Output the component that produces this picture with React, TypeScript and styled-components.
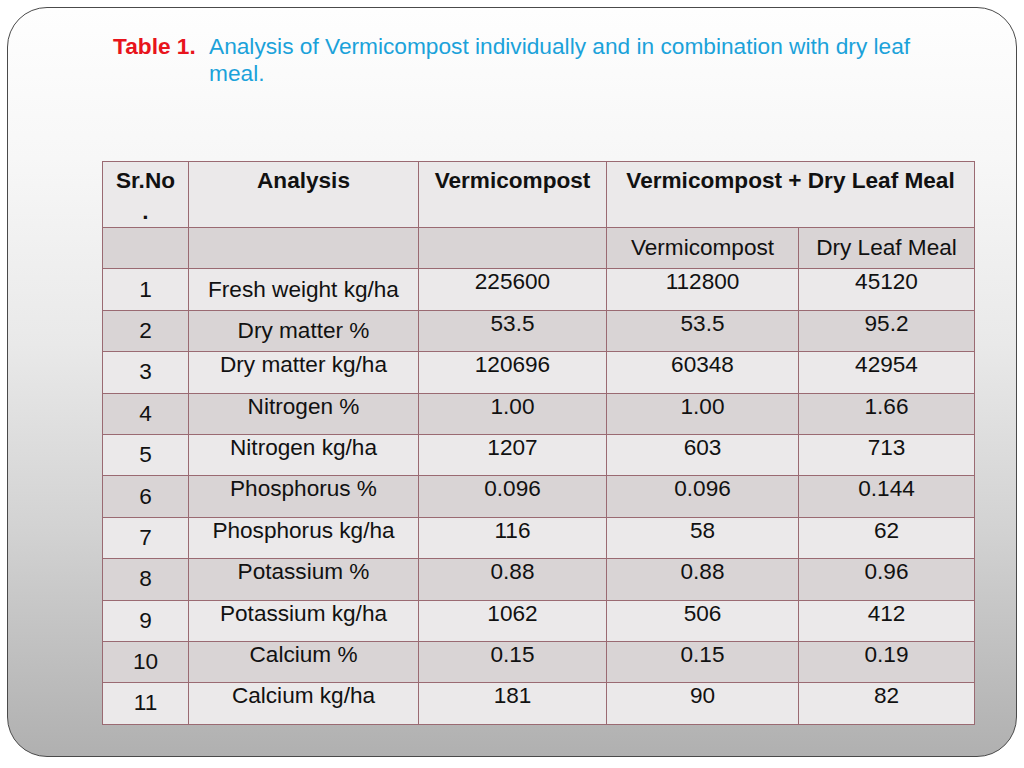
import React from "react";
import styled, { createGlobalStyle } from "styled-components";

const Global = createGlobalStyle`
  html, body { margin: 0; padding: 0; background: #ffffff; }
  body { font-family: "Liberation Sans", Arial, sans-serif; }
`;

const Page = styled.div`
  width: 1024px;
  height: 768px;
  padding: 7px;
  box-sizing: border-box;
  background: #ffffff;
`;

const Slide = styled.div`
  width: 1010px;
  height: 750px;
  box-sizing: border-box;
  border: 1.5px solid #4a4a4a;
  border-radius: 40px;
  background: linear-gradient(180deg, #fefefe 0%, #f7f7f7 20%, #e9e9e9 45%, #d2d2d2 70%, #b0b0b0 100%);
  padding: 25px 0 0 94px;
  display: flex;
  flex-direction: column;
`;

const Title = styled.div`
  display: flex;
  align-items: flex-start;
  margin-left: 11px;
  font-family: "Liberation Sans", Arial, sans-serif;
  font-size: 22.7px;
  line-height: 27px;
`;

const Label = styled.span`
  color: #e8141c;
  font-weight: bold;
  width: 96px;
  flex: none;
`;

const Caption = styled.span`
  color: #1ba2da;
  width: 720px;
`;

const Table = styled.table`
  margin-top: 74px;
  border-collapse: collapse;
  table-layout: fixed;
  width: 872px;
  font-family: "Liberation Sans", Arial, sans-serif;
  font-size: 22.6px;
  line-height: 26px;
  color: #111;
`;

const Row = styled.tr<{ $dark?: boolean; $h?: number }>`
  height: ${(p) => p.$h ?? 41.4}px;
  background: ${(p) => (p.$dark ? "#d9d4d5" : "#ebe9ea")};
`;

const Cell = styled.td<{ $valign?: "top" | "middle"; $bold?: boolean }>`
  border: 1.5px solid #9a6a72;
  text-align: center;
  vertical-align: ${(p) => p.$valign ?? "top"};
  padding: ${(p) => (p.$valign === "middle" ? "0 2px" : "0 2px")};
  font-weight: ${(p) => (p.$bold ? "bold" : "normal")};
  white-space: nowrap;
`;

const HeadCell = styled(Cell)`
  line-height: 31px;
  padding-top: 3px;
`;

type R = [string, string, string, string, string];
const rows: R[] = [
  ["1", "Fresh weight kg/ha", "225600", "112800", "45120"],
  ["2", "Dry matter %", "53.5", "53.5", "95.2"],
  ["3", "Dry matter kg/ha", "120696", "60348", "42954"],
  ["4", "Nitrogen %", "1.00", "1.00", "1.66"],
  ["5", "Nitrogen kg/ha", "1207", "603", "713"],
  ["6", "Phosphorus %", "0.096", "0.096", "0.144"],
  ["7", "Phosphorus kg/ha", "116", "58", "62"],
  ["8", "Potassium %", "0.88", "0.88", "0.96"],
  ["9", "Potassium kg/ha", "1062", "506", "412"],
  ["10", "Calcium %", "0.15", "0.15", "0.19"],
  ["11", "Calcium kg/ha", "181", "90", "82"],
];

export default function App() {
  return (
    <Page>
      <Global />
      <Slide>
        <Title>
          <Label>Table 1.</Label>
          <Caption>
            Analysis of Vermicompost individually and in combination with dry leaf meal.
          </Caption>
        </Title>
        <Table>
          <colgroup>
            <col style={{ width: 86 }} />
            <col style={{ width: 230 }} />
            <col style={{ width: 188 }} />
            <col style={{ width: 192 }} />
            <col style={{ width: 176 }} />
          </colgroup>
          <tbody>
            <Row $h={65}>
              <HeadCell $bold>
                Sr.No
                <br />.
              </HeadCell>
              <HeadCell $bold>Analysis</HeadCell>
              <HeadCell $bold>Vermicompost</HeadCell>
              <HeadCell $bold colSpan={2}>
                Vermicompost + Dry Leaf Meal
              </HeadCell>
            </Row>
            <Row $dark>
              <Cell />
              <Cell />
              <Cell />
              <Cell $valign="middle">Vermicompost</Cell>
              <Cell $valign="middle">Dry Leaf Meal</Cell>
            </Row>
            {rows.map((r, i) => (
              <Row key={r[0]} $dark={i % 2 === 1}>
                <Cell $valign="middle">{r[0]}</Cell>
                <Cell $valign={i < 2 ? "middle" : "top"}>{r[1]}</Cell>
                <Cell>{r[2]}</Cell>
                <Cell>{r[3]}</Cell>
                <Cell>{r[4]}</Cell>
              </Row>
            ))}
          </tbody>
        </Table>
      </Slide>
    </Page>
  );
}
